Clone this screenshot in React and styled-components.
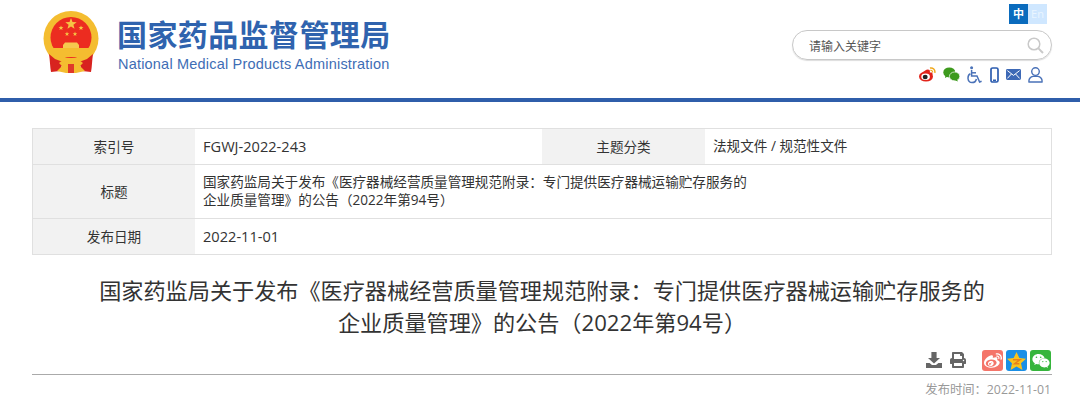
import styled, { createGlobalStyle } from "styled-components";
import { FaWeibo, FaWeixin, FaPrint } from "react-icons/fa";

const GlobalStyle = createGlobalStyle`
  html, body {
    margin: 0;
    padding: 0;
    background: #fff;
    overflow: hidden;
  }
  * { box-sizing: border-box; }
  body {
    font-family: "Open Sans", "Noto Sans CJK SC", sans-serif;
    color: #333;
  }
`;

const starPoints = (cx, cy, r) =>
  Array.from({ length: 10 }, (_, i) => {
    const rad = i % 2 ? r * 0.42 : r;
    const a = -Math.PI / 2 + (i * Math.PI) / 5;
    return `${(cx + rad * Math.cos(a)).toFixed(2)},${(cy + rad * Math.sin(a)).toFixed(2)}`;
  }).join(" ");

// viewBox uses the page coordinates of the emblem, easier to compare with the reference
function Emblem() {
  const small = [[61, 28, 2.6], [81, 28, 2.6], [67, 34, 2.4], [75, 34, 2.4]];
  return (
    <svg width="56" height="63" viewBox="43 11 56 63">
      <circle cx="71" cy="38.5" r="27.5" fill="#f4bd30" />
      <circle cx="71" cy="37.5" r="20.5" fill="#ec2c20" />
      <polygon points={starPoints(71, 24, 6)} fill="#f6c544" />
      {small.map(([x, y, r]) => (
        <polygon key={x + "-" + y} points={starPoints(x, y, r)} fill="#f6c544" />
      ))}
      <path d="M63 45 L65 42.5 H77 L79 45 V48 H63 Z" fill="#f6c94e" />
      <path d="M51 48 H91 C90 52 88 55 86 57 H56 C54 55 52 52 51 48 Z" fill="#f4bd30" />
      <path d="M49 54 C50 60 50 67 51 72 L60 71 L63 62 L55 59 Z" fill="#d8231f" />
      <path d="M93 54 C92 60 92 67 91 72 L82 71 L79 62 L87 59 Z" fill="#d8231f" />
      <path d="M59 63 C64 58 78 58 83 63 L80 66 L85 71 L76 73 H66 L57 71 L62 66 Z" fill="#f4bd30" />
      <path d="M68 64 H74 V73 H68 Z" fill="#e0392a" />
    </svg>
  );
}

function WeiboColor() {
  return (
    <svg width="17" height="15" viewBox="0 0 17 15">
      <ellipse cx="7" cy="9.6" rx="7" ry="5" fill="#e2231a" />
      <path d="M3 7 C5 3 9 1.5 10.5 3 C11.5 4.4 10.5 6 10.5 6 C12 5 14 5.4 13.5 7.5 L10 10 Z" fill="#e2231a" />
      <ellipse cx="6.6" cy="9.8" rx="4.3" ry="3.2" fill="#fff" />
      <ellipse cx="6.2" cy="10" rx="2.5" ry="2.2" fill="#222" />
      <path d="M11 1 C14 0.4 16.4 2.6 15.8 5.8" fill="none" stroke="#f0a81c" strokeWidth="1.5" />
      <path d="M11.4 3.4 C12.8 3.1 14 4.2 13.6 5.6" fill="none" stroke="#f0a81c" strokeWidth="1.1" />
    </svg>
  );
}

function WechatColor() {
  return (
    <svg width="17" height="15" viewBox="0 0 17 15">
      <ellipse cx="6.3" cy="5.4" rx="6" ry="5" fill="#3d9a1d" />
      <path d="M2.5 8 L2 11 L5.6 9 Z" fill="#3d9a1d" />
      <ellipse cx="11.6" cy="9.4" rx="5.2" ry="4.4" fill="#3d9a1d" stroke="#fff" strokeWidth=".7" />
      <path d="M14 12.4 L15 14.6 L11.8 13.2 Z" fill="#3d9a1d" />
    </svg>
  );
}

function AccessIcon() {
  return (
    <svg width="15" height="18" viewBox="0 0 15 18" fill="none" stroke="#4a72b8" strokeWidth="1.5">
      <circle cx="4.6" cy="1.8" r="1.5" fill="#4a72b8" stroke="none" />
      <path d="M4.6 4 V10 H10 L12.6 16 L14.6 15.2" />
      <path d="M4.6 6.8 H9" />
      <path d="M3.4 7.8 C0 9.4 0 16.6 5 16.6 C7.6 16.6 9 15 9.4 13" />
    </svg>
  );
}

function PhoneIcon() {
  return (
    <svg width="9" height="16" viewBox="0 0 9 16">
      <rect x="1" y="1" width="7" height="14" rx="1.6" fill="none" stroke="#2d5db0" strokeWidth="1.7" />
      <rect x="3" y="12.5" width="3" height="1.6" fill="#2d5db0" />
    </svg>
  );
}

function MailIcon() {
  return (
    <svg width="15" height="11" viewBox="0 0 15 11">
      <rect width="15" height="11" rx="1.4" fill="#3d69b6" />
      <path d="M1.4 1.6 L7.5 6.4 L13.6 1.6 M1.4 9.4 L5.4 5 M13.6 9.4 L9.6 5" fill="none" stroke="#fff" strokeWidth="1" />
    </svg>
  );
}

function UserIcon() {
  return (
    <svg width="15" height="16" viewBox="0 0 15 16" fill="none" stroke="#4a72b8" strokeWidth="1.4">
      <circle cx="7.5" cy="4.6" r="3.8" />
      <path d="M1 15 C0.4 11.4 3 9.6 5 9.4 H10 C12 9.6 14.6 11.4 14 15 Z" />
    </svg>
  );
}

function SearchIcon() {
  return (
    <svg width="17" height="17" viewBox="0 0 17 17" fill="none" stroke="#c9c9c9">
      <circle cx="7" cy="7" r="5.8" strokeWidth="1.5" />
      <path d="M11.4 11.4 L16 16" strokeWidth="2" />
    </svg>
  );
}

function DownloadIcon() {
  return (
    <svg width="16" height="16" viewBox="0 0 16 16" fill="#666">
      <path d="M5.4 0 H10.6 V6 H14 L8 11.6 L2 6 H5.4 Z" />
      <path d="M0 11 H3.6 L6 13 H10 L12.4 11 H16 V16 H0 Z" />
    </svg>
  );
}

function QzoneStar() {
  return (
    <svg width="19" height="18" viewBox="0 0 16 15">
      <polygon points="8,0 10.4,5 16,5.7 11.8,9.4 13,15 8,12.2 3,15 4.2,9.4 0,5.7 5.6,5" fill="#f8c21c" />
      <path d="M5 6.4 H11 L6.4 9.8 H10.4" fill="none" stroke="#e8801a" strokeWidth="1.2" />
    </svg>
  );
}

export default function App() {
  return (
    <>
      <GlobalStyle />
      <Header>
        <Brand>
          <Emblem />
          <BrandText>
            <BrandCn>国家药品监督管理局</BrandCn>
            <BrandEn>National Medical Products Administration</BrandEn>
          </BrandText>
        </Brand>
        <HeaderRight>
          <LangSwitch>
            <LangItem $active>中</LangItem>
            <LangItem>En</LangItem>
          </LangSwitch>
          <SearchBox>
            <SearchHint>请输入关键字</SearchHint>
            <SearchIcon />
          </SearchBox>
          <QuickLinks>
            <WeiboColor />
            <WechatColor />
            <AccessIcon />
            <PhoneIcon />
            <MailIcon />
            <UserIcon />
          </QuickLinks>
        </HeaderRight>
      </Header>
      <Main>
        <MetaTable>
          <MetaRow $height="35px">
            <MetaLabel>索引号</MetaLabel>
            <MetaValue $latin>FGWJ-2022-243</MetaValue>
            <MetaLabel $second>主题分类</MetaLabel>
            <MetaValue>法规文件 / 规范性文件</MetaValue>
          </MetaRow>
          <MetaRow $height="54px">
            <MetaLabel>标题</MetaLabel>
            <MetaValue>
              <span>国家药监局关于发布《医疗器械经营质量管理规范附录：专门提供医疗器械运输贮存服务的</span>
              <span>企业质量管理》的公告（2022年第94号）</span>
            </MetaValue>
          </MetaRow>
          <MetaRow $height="36px">
            <MetaLabel>发布日期</MetaLabel>
            <MetaValue $latin>2022-11-01</MetaValue>
          </MetaRow>
        </MetaTable>
        <Title>
          国家药监局关于发布《医疗器械经营质量管理规范附录：专门提供医疗器械运输贮存服务的
          <br />
          企业质量管理》的公告（2022年第94号）
        </Title>
        <Tools>
          <ToolIcons>
            <DownloadIcon />
            <FaPrint size={16} />
          </ToolIcons>
          <ShareIcons>
            <ShareBtn $bg="#f4756a"><FaWeibo size={18} /></ShareBtn>
            <ShareBtn $bg="#1a8fe6"><QzoneStar /></ShareBtn>
            <ShareBtn $bg="#36b53c"><FaWeixin size={18} /></ShareBtn>
          </ShareIcons>
        </Tools>
        <PublishTime>发布时间：2022-11-01</PublishTime>
      </Main>
    </>
  );
}

const Header = styled.header`
  height: 102px;
  border-bottom: 4px solid #2f5eaa;
  padding: 4px 28px 0 43px;
  display: flex;
  justify-content: space-between;
`;
const Brand = styled.div`
  display: flex;
  align-items: flex-start;
  gap: 18px;
  padding-top: 7px;
`;
const BrandText = styled.div`
  display: flex;
  flex-direction: column;
  padding-top: 5px;
`;
const BrandCn = styled.div`
  font-family: "Noto Sans CJK SC", sans-serif;
  font-size: 30px;
  font-weight: 700;
  line-height: 35px;
  letter-spacing: 0.4px;
  color: #2f63ae;
  white-space: nowrap;
`;
const BrandEn = styled.div`
  font-family: "Liberation Sans", sans-serif;
  font-size: 14.5px;
  line-height: 18px;
  margin-top: 4px;
  margin-left: 1px;
  letter-spacing: 0.2px;
  color: #3e6db5;
  white-space: nowrap;
`;
const HeaderRight = styled.div`
  width: 260px;
  display: flex;
  flex-direction: column;
  align-items: flex-end;
`;
const LangSwitch = styled.div`
  display: flex;
  margin-right: 5px;
`;
const LangItem = styled.span`
  width: 19px;
  height: 20px;
  line-height: 19px;
  text-align: center;
  font-size: 11px;
  font-weight: ${(p) => (p.$active ? 700 : 400)};
  background: ${(p) => (p.$active ? "#0a6bbd" : "#cfe7ff")};
  color: ${(p) => (p.$active ? "#fff" : "#eaf5ff")};
`;
const SearchBox = styled.div`
  width: 260px;
  height: 30px;
  margin-top: 6px;
  border: 1px solid #c8c8c8;
  border-radius: 15px;
  box-shadow: 0 1px 1px #ddd;
  padding: 0 7px 0 16px;
  display: flex;
  align-items: center;
  justify-content: space-between;
`;
const SearchHint = styled.span`
  font-family: "Noto Sans CJK SC", sans-serif;
  font-size: 12px;
  color: #555;
`;
const QuickLinks = styled.div`
  display: flex;
  align-items: center;
  gap: 7.2px;
  margin-top: 5px;
  margin-right: 9px;
  height: 19px;
`;
const Main = styled.main`
  padding: 26px 28px 0 32px;
`;
const MetaTable = styled.div`
  border: 1px solid #e0e0e0;
  height: 127px;
  display: flex;
  flex-direction: column;
`;
const MetaRow = styled.div`
  display: flex;
  flex: 0 0 ${(p) => p.$height};
  & + & { border-top: 1px solid #e0e0e0; }
`;
const MetaLabel = styled.div`
  width: ${(p) => (p.$second ? "163px" : "162px")};
  flex: none;
  background: #f2f2f2;
  display: flex;
  align-items: center;
  justify-content: center;
  padding-bottom: 2px;
  font-size: 13.6px;
`;
const MetaValue = styled.div`
  flex: 0 0 347px;
  &:last-child { flex: 1; }
  padding: 0 0 2px 8px;
  display: flex;
  flex-direction: column;
  justify-content: center;
  align-items: flex-start;
  font-size: ${(p) => (p.$latin ? "14.6px" : "13.6px")};
  line-height: 18px;
  white-space: nowrap;
`;
const Title = styled.h1`
  margin: 19px 0 0;
  text-align: center;
  font-family: "Open Sans", "Noto Sans CJK SC", sans-serif;
  font-size: 22.15px;
  font-weight: 400;
  line-height: 32px;
  color: #333;
`;
const Tools = styled.div`
  height: 37px;
  border-bottom: 1px solid #aaa;
  display: flex;
  justify-content: flex-end;
  align-items: flex-end;
  gap: 16px;
  padding: 0 1px 3px 0;
`;
const ToolIcons = styled.div`
  display: flex;
  align-items: center;
  gap: 8px;
  padding-bottom: 3px;
  color: #666;
`;
const ShareIcons = styled.div`
  display: flex;
  gap: 3px;
`;
const ShareBtn = styled.span`
  width: 21px;
  height: 21px;
  border-radius: 3px;
  background: ${(p) => p.$bg};
  color: #fff;
  display: flex;
  align-items: center;
  justify-content: center;
`;
const PublishTime = styled.div`
  margin-top: 6px;
  padding-right: 1px;
  text-align: right;
  font-size: 12.3px;
  line-height: 18px;
  color: #999;
`;
